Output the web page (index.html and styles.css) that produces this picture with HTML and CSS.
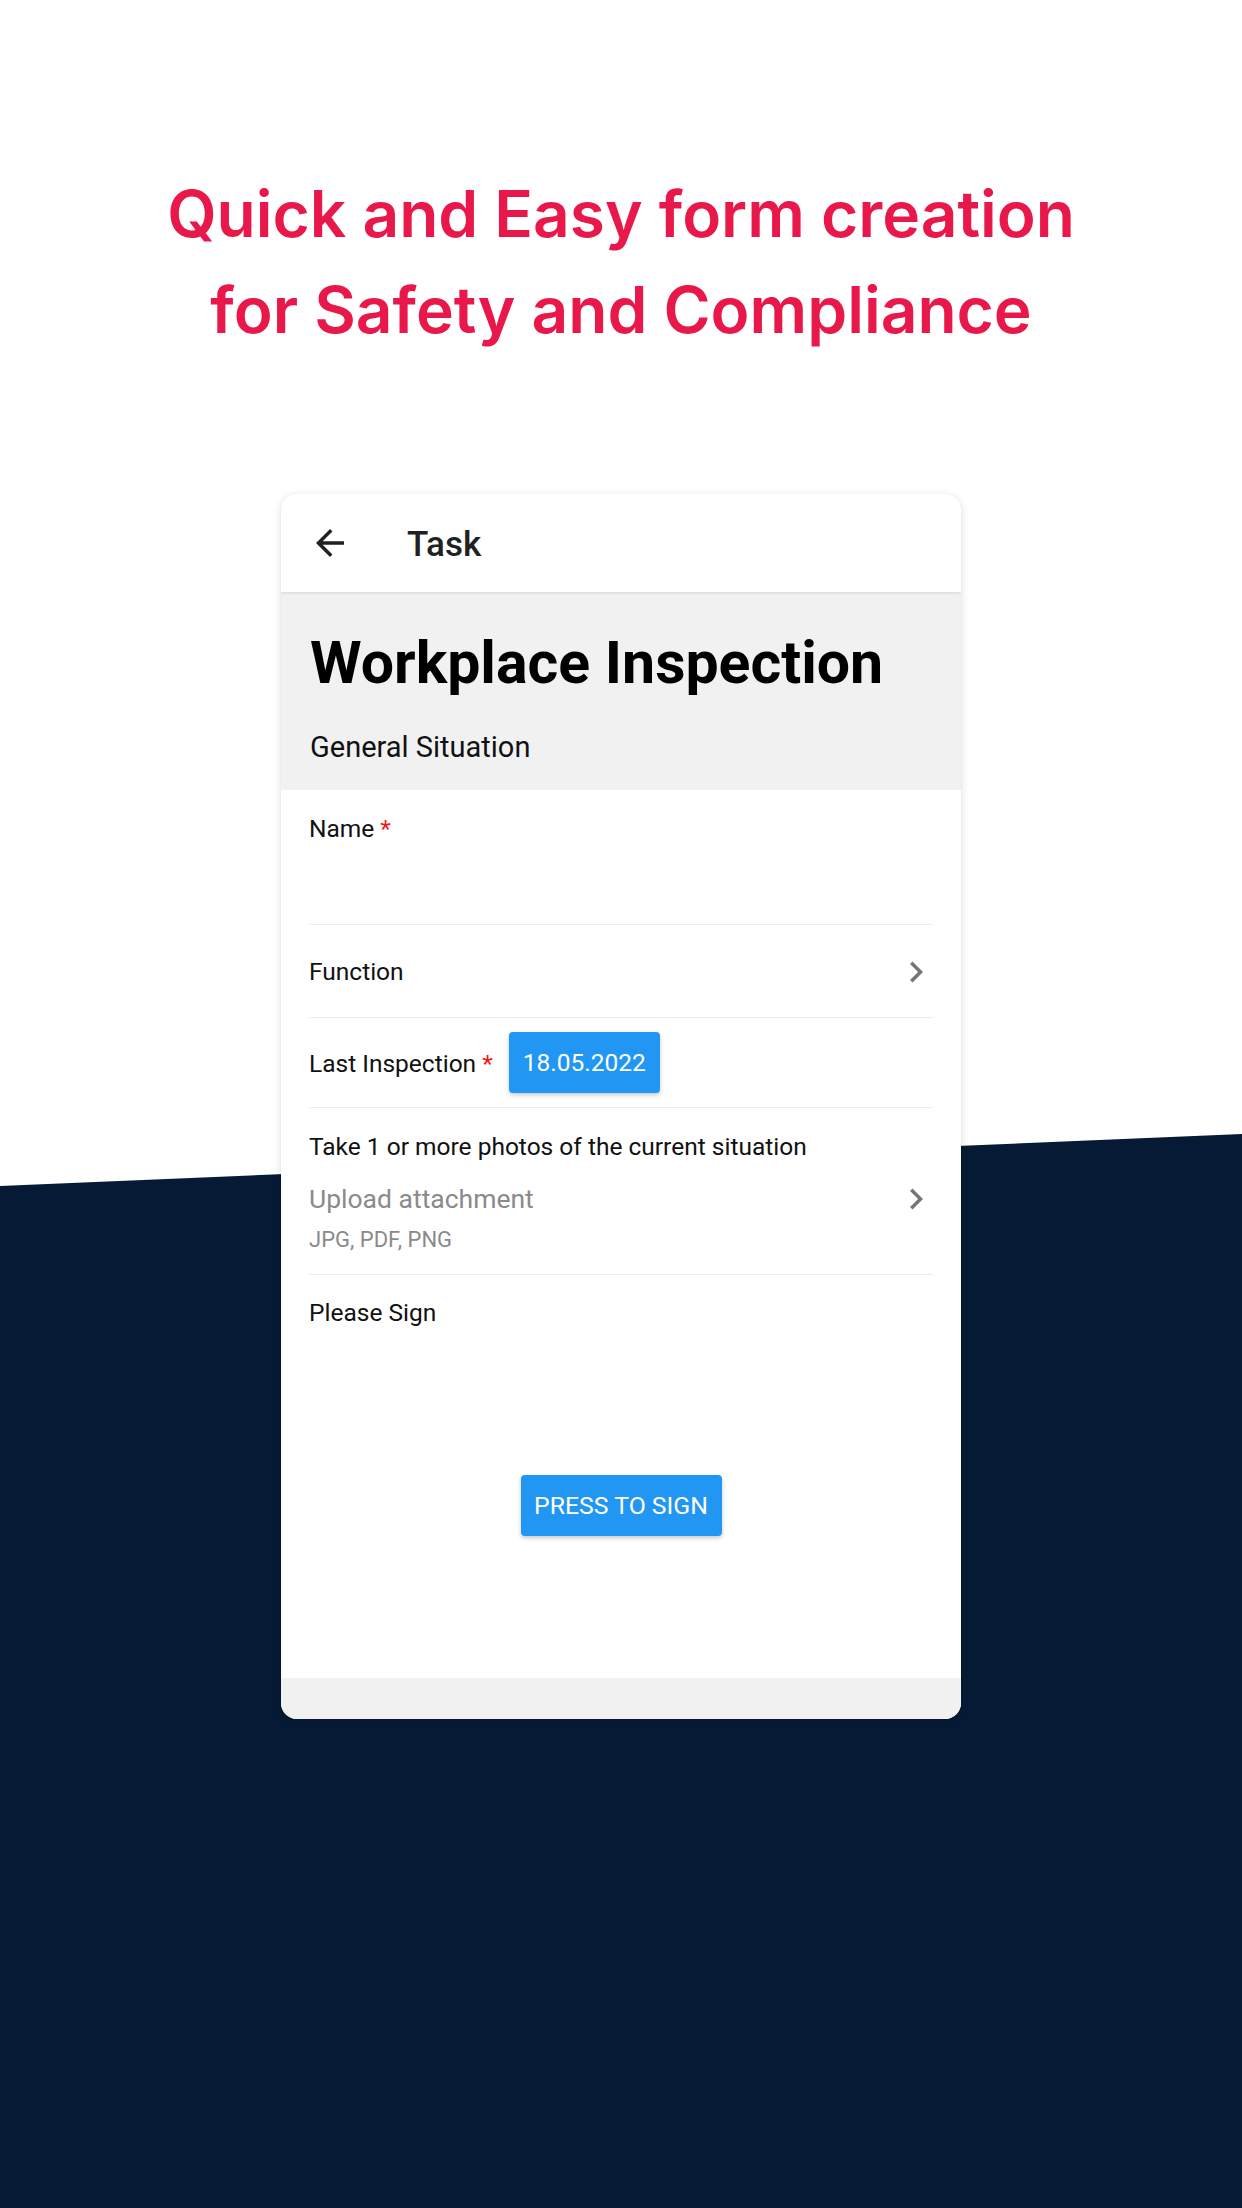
FILE: index.html
```html
<!DOCTYPE html>
<html lang="en">
<head>
<meta charset="utf-8">
<title>Workplace Inspection</title>
<link rel="stylesheet" href="styles.css">
</head>
<body>
<div class="page">
  <h1 class="headline">Quick and Easy form creation<br>for Safety and Compliance</h1>

  <div class="phone-card">
    <header class="toolbar">
      <svg class="icon icon-back" viewBox="0 0 24 24" aria-hidden="true">
        <path d="M20 11H7.83l5.59-5.59L12 4l-8 8 8 8 1.41-1.41L7.83 13H20v-2z"/>
      </svg>
      <span class="toolbar-title">Task</span>
    </header>

    <section class="form-hero">
      <h2 class="form-title">Workplace Inspection</h2>
      <p class="form-section">General Situation</p>
    </section>

    <div class="form-body">
      <div class="field field-name">
        <div class="label">Name <span class="req">*</span></div>
      </div>

      <div class="field field-row field-function">
        <div class="label">Function</div>
        <svg class="icon icon-chevron" viewBox="0 0 24 24" aria-hidden="true">
          <path d="M10 6L8.59 7.41 13.17 12l-4.58 4.59L10 18l6-6z"/>
        </svg>
      </div>

      <div class="field field-row field-date">
        <div class="label">Last Inspection <span class="req">*</span></div>
        <button class="btn btn-date" type="button">18.05.2022</button>
      </div>

      <div class="field field-upload">
        <div class="label">Take 1 or more photos of the current situation</div>
        <div class="upload-line">
          <span class="upload-text">Upload attachment</span>
          <svg class="icon icon-chevron" viewBox="0 0 24 24" aria-hidden="true">
            <path d="M10 6L8.59 7.41 13.17 12l-4.58 4.59L10 18l6-6z"/>
          </svg>
        </div>
        <div class="upload-hint">JPG, PDF, PNG</div>
      </div>

      <div class="field field-sign">
        <div class="label">Please Sign</div>
        <button class="btn btn-sign" type="button">PRESS TO SIGN</button>
      </div>
    </div>

    <footer class="card-foot"></footer>
  </div>
</div>
</body>
</html>
```

FILE: styles.css
```css
* {
  box-sizing: border-box;
}

html,
body {
  margin: 0;
  padding: 0;
}

body {
  background: #ffffff;
  font-family: Roboto, "Noto Sans", "Liberation Sans", sans-serif;
  color: #111111;
}

/* full canvas with the navy slanted backdrop */
.page {
  position: relative;
  width: 1242px;
  height: 2208px;
  overflow: hidden;
  padding-top: 166px;
}

.page::before {
  content: "";
  position: absolute;
  inset: 0;
  background: #061a35;
  clip-path: polygon(0 1186px, 100% 1134px, 100% 100%, 0 100%);
}

.headline {
  position: relative;
  margin: 0;
  text-align: center;
  font-family: Inter, "Noto Sans", sans-serif;
  font-weight: 600;
  font-size: 64px;
  line-height: 96px;
  color: #e8194a;
}

/* app screen card */
.phone-card {
  position: relative;
  width: 680px;
  margin: 136px auto 0;
  background: #ffffff;
  border-radius: 16px;
  overflow: hidden;
  box-shadow: 0 2px 10px rgba(0, 0, 0, 0.13), 0 0 1px rgba(0, 0, 0, 0.12);
}

.icon {
  display: block;
  flex: none;
  width: 42px;
  height: 42px;
}

.toolbar {
  position: relative;
  z-index: 1;
  height: 98px;
  display: flex;
  align-items: center;
  padding-left: 28px;
  background: #ffffff;
  box-shadow: 0 1px 3px rgba(0, 0, 0, 0.12);
}

.icon-back {
  fill: #212121;
}

.toolbar-title {
  margin: 4px 0 0 56px;
  font-size: 35px;
  font-weight: 500;
  color: #212121;
  line-height: 40px;
}

.form-hero {
  background: #f1f1f1;
  padding: 36px 29px 26px;
}

.form-title {
  margin: 0;
  font-size: 59px;
  line-height: 70px;
  font-weight: 700;
  color: #000000;
}

.form-section {
  margin: 32px 0 0;
  font-size: 29px;
  line-height: 34px;
  color: #111111;
}

.form-body {
  background: #ffffff;
}

.field {
  margin: 0 28px;
  border-bottom: 1px solid #ededed;
}

.label {
  font-size: 24.5px;
  line-height: 28px;
  color: #111111;
}

.req {
  color: #f01818;
}

.field-name {
  padding: 25px 0 81px;
}

.field-row {
  display: flex;
  align-items: center;
}

.field-function {
  height: 93px;
  padding-top: 2px;
  justify-content: space-between;
}

.icon-chevron {
  fill: #757575;
  margin-right: -4px;
}

.field-date {
  height: 90px;
  gap: 16px;
}

.field-date .label {
  margin-top: 2px;
}

.btn {
  border: 0;
  margin: 0;
  font-family: inherit;
  color: #ffffff;
  background: #2196f3;
  border-radius: 4px;
  height: 61px;
  white-space: nowrap;
  box-shadow: 0 2px 4px rgba(0, 0, 0, 0.22);
  cursor: pointer;
}

.btn-date {
  padding: 0 14px;
  font-size: 24.5px;
}

.field-upload {
  padding: 25px 0 21px;
}

.upload-line {
  display: flex;
  align-items: center;
  justify-content: space-between;
  margin-top: 22px;
}

.upload-line .icon-chevron {
  margin-top: -5px;
  margin-bottom: -5px;
}

.upload-text {
  font-size: 26.5px;
  line-height: 32px;
  color: #8a8a8a;
}

.upload-hint {
  margin-top: 12px;
  font-size: 22px;
  line-height: 26px;
  color: #8a8a8a;
}

.field-sign {
  border-bottom: 0;
  height: 403px;
  padding-top: 24px;
  display: flex;
  flex-direction: column;
  align-items: center;
}

.field-sign .label {
  align-self: stretch;
}

.btn-sign {
  margin-top: 148px;
  padding: 0;
  width: 201px;
  font-size: 24.8px;
}

.card-foot {
  height: 41px;
  background: #f1f1f1;
}
```
